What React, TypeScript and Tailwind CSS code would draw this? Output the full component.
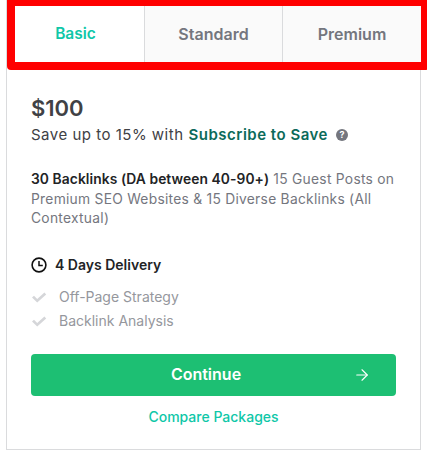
import { ArrowRight } from 'lucide-react'

const tabs = ['Basic', 'Standard', 'Premium']
const features = ['Off-Page Strategy', 'Backlink Analysis']

function Check() {
  return (
    <svg viewBox="0 0 16 16" className="w-4 h-4 shrink-0" aria-hidden="true">
      <path d="M1 8.5 L3 6.8 L6.2 10 L13.4 3.6 L15.2 5.4 L6.2 13.6 Z" fill="#d5d6d9" />
    </svg>
  )
}

function Clock() {
  return (
    <svg viewBox="0 0 16 16" className="w-4 h-4 shrink-0" fill="none" stroke="#111" aria-hidden="true">
      <circle cx="8" cy="8" r="6.9" strokeWidth="1.6" />
      <path d="M8 4v4.4h3.8" strokeWidth="1.5" />
    </svg>
  )
}

export default function App() {
  return (
    <div className="w-[427px] h-[458px] overflow-hidden bg-white font-['Inter',sans-serif]">
      <div className="ml-[6px] w-[415px] h-[450px] border border-t-0 border-[#dadbdd] flex flex-col">
        {/* tabs, highlighted in red */}
        <div className="w-[422px] h-[70px] shrink-0 border-l-8 border-r-8 border-t-[6px] border-b-8 border-[#ff0000] rounded-b-[4px] flex box-border">
          {tabs.map((t, i) => (
            <div
              key={t}
              className={
                i === 0
                  ? 'w-[130px] pr-2 flex items-center justify-center text-[15.5px] font-semibold text-[#0fc7a8] border-r border-[#dadbdd]'
                  : i === 1
                    ? 'w-[138px] flex items-center justify-center text-[16px] font-semibold text-[#74767e] bg-[#fafafa] border-r border-[#dadbdd]'
                    : 'flex-1 flex items-center justify-center text-[16px] font-semibold text-[#74767e] bg-[#fafafa]'
              }
            >
              {t}
            </div>
          ))}
        </div>

        <div className="flex-1 px-6 pt-[23px]">
          <div className="text-[22px] leading-[30px] font-semibold text-[#404145]">$100</div>
          <div className="mt-[1px] flex items-center text-[15px] tracking-[0.5px] leading-[22px] text-[#404145]">
            <span>Save up to 15% with</span>
            <span className="ml-[5px] font-semibold text-[#0c6b5a]">Subscribe to Save</span>
            <span className="ml-2 w-3 h-3 rounded-full bg-[#74767e] text-white text-[9px] tracking-normal leading-3 font-bold text-center">?</span>
          </div>

          <p className="mt-[24px] text-[13.8px] leading-[19.7px] tracking-[0.27px] text-[#74767e]">
            <span className="font-semibold tracking-[0.08px] text-[#222325]">30 Backlinks (DA between 40-90+)</span> 15 Guest Posts on Premium SEO Websites &amp; 15 Diverse Backlinks (All Contextual)
          </p>

          <div className="mt-[26px] flex items-center gap-2 text-[14px] leading-5 font-semibold text-[#222325]">
            <Clock />
            <span>4 Days Delivery</span>
          </div>

          <ul className="mt-3 flex flex-col gap-1">
            {features.map(f => (
              <li key={f} className="flex items-center gap-3 text-[14px] leading-5 text-[#95979d]">
                <Check />
                <span>{f}</span>
              </li>
            ))}
          </ul>

          <button className="relative mt-[23px] w-full h-[42px] pr-[15px] pb-[2px] rounded-[4px] bg-[#1dbf73] text-white text-[16px] font-semibold flex items-center justify-center">
            Continue
            <ArrowRight className="absolute right-[25px] top-[12px] w-[18px] h-[18px]" strokeWidth={1.5} />
          </button>

          <div className="mt-[11px] text-center text-[14px] leading-5 font-medium text-[#0fc7a8]">Compare Packages</div>
        </div>
      </div>
    </div>
  )
}
